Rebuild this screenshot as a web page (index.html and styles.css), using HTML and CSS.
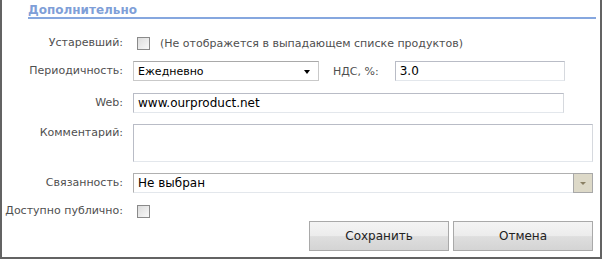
FILE: index.html
```html
<!DOCTYPE html>
<html>
<head>
<meta charset="utf-8">
<link rel="stylesheet" href="styles.css">
</head>
<body>
<div class="panel">
  <div class="legend"><span class="legend-text">Дополнительно</span></div>
  <div class="row row-obsolete">
    <label class="lbl">Устаревший:</label>
    <div class="ctl">
      <span class="checkbox"></span>
      <span class="hint">(Не отображется в выпадающем списке продуктов)</span>
    </div>
  </div>
  <div class="row row-period">
    <label class="lbl">Периодичность:</label>
    <div class="ctl">
      <div class="select"><span>Ежедневно</span><span class="arrow"></span></div>
      <label class="lbl-inline">НДС, %:</label>
      <div class="input input-vat">3.0</div>
    </div>
  </div>
  <div class="row row-web">
    <label class="lbl">Web:</label>
    <div class="ctl">
      <div class="input input-web">www.ourproduct.net</div>
    </div>
  </div>
  <div class="row row-comment">
    <label class="lbl">Комментарий:</label>
    <div class="ctl">
      <div class="textarea"></div>
    </div>
  </div>
  <div class="row row-link">
    <label class="lbl">Связанность:</label>
    <div class="ctl">
      <div class="combo"><span class="combo-text">Не выбран</span><span class="trigger"><span class="tri"></span></span></div>
    </div>
  </div>
  <div class="row row-public">
    <label class="lbl">Доступно публично:</label>
    <div class="ctl">
      <span class="checkbox"></span>
    </div>
  </div>
  <div class="buttons">
    <button class="btn">Сохранить</button>
    <button class="btn">Отмена</button>
  </div>
</div>
</body>
</html>
```
FILE: styles.css
```css
html, body {
  margin: 0;
  padding: 0;
  background: #fff;
}
body {
  font-family: "DejaVu Sans", Verdana, sans-serif;
  font-size: 11px;
}
.panel {
  width: 598px;
  height: 257px;
  border-left: 2px solid #636363;
  border-right: 2px solid #636363;
  border-bottom: 2px solid #636363;
}
.legend {
  margin-left: 26px;
  margin-right: 4px;
  height: 17px;
  border-bottom: 2px solid #86a7df;
  display: flex;
  align-items: flex-end;
}
.legend-text {
  color: #7f9fd8;
  font-weight: bold;
  font-size: 12px;
  line-height: 12px;
  padding-bottom: 1px;
}
.row {
  display: flex;
}
.lbl {
  width: 121px;
  text-align: right;
  color: #4f4f4f;
  flex: none;
  white-space: nowrap;
  line-height: 20px;
}
.ctl {
  margin-left: 10px;
  display: flex;
  align-items: center;
  flex: 1;
}
.row-obsolete { margin-top: 14px; height: 20px; }
.row-period { margin-top: 8px; height: 20px; }
.row-web { margin-top: 12px; height: 20px; }
.row-comment { margin-top: 11px; height: 38px; }
.row-comment .lbl { line-height: 18px; }
.row-link { margin-top: 11px; height: 20px; }
.row-public { margin-top: 10px; height: 16px; }
.row-public .lbl { line-height: 16px; }

.checkbox {
  width: 11px;
  height: 11px;
  border: 1px solid #8a8a8a;
  background: linear-gradient(135deg, #dcdcdc, #f8f8f8);
  margin-left: 4px;
  flex: none;
}
.hint {
  margin-left: 10px;
  color: #4f4f4f;
  white-space: nowrap;
}
.select {
  box-sizing: border-box;
  width: 186px;
  height: 20px;
  border: 1px solid #c9c9c9;
  border-top-color: #a9a9a9;
  display: flex;
  align-items: center;
  justify-content: space-between;
  padding: 0 8px 0 4px;
  color: #000;
}
.arrow {
  width: 0;
  height: 0;
  border-left: 3.5px solid transparent;
  border-right: 3.5px solid transparent;
  border-top: 4px solid #000;
  margin-top: 2px;
}
.lbl-inline {
  color: #4f4f4f;
  margin-left: 14px;
  white-space: nowrap;
}
.input {
  box-sizing: border-box;
  height: 20px;
  border: 1px solid #b9bcc6;
  border-bottom-color: #e3e7ec;
  border-right-color: #d6d9de;
  padding: 0 4px;
  line-height: 18px;
  color: #000;
  font-size: 12px;
}
.input-vat {
  width: 170px;
  margin-left: 16px;
}
.input-web {
  width: 431px;
}
.textarea {
  box-sizing: border-box;
  width: 460px;
  height: 38px;
  border: 1px solid #b9bcc6;
  border-bottom-color: #e3e7ec;
  border-right-color: #d6d9de;
  align-self: flex-start;
}
.combo {
  box-sizing: border-box;
  width: 460px;
  height: 20px;
  border: 1px solid #b0b0b0;
  border-bottom-color: #e3e7ec;
  display: flex;
}
.combo-text {
  flex: 1;
  padding-left: 4px;
  line-height: 18px;
  color: #000;
  font-size: 12px;
}
.trigger {
  width: 20px;
  height: 20px;
  margin-top: -1px;
  margin-right: -1px;
  box-sizing: border-box;
  border: 1px solid #a8a8a8;
  background: #ddd9c8;
  display: flex;
  align-items: center;
  justify-content: center;
}
.tri {
  width: 0;
  height: 0;
  border-left: 3px solid transparent;
  border-right: 3px solid transparent;
  border-top: 3px solid #8a8064;
  margin-top: 1px;
}
.buttons {
  display: flex;
  justify-content: flex-end;
  gap: 4px;
  margin-top: 2px;
  margin-right: 7px;
}
.btn {
  width: 140px;
  height: 30px;
  box-sizing: border-box;
  border: 1px solid #a9a9a9;
  background: linear-gradient(#f4f4f4 0%, #ececec 50%, #dedede 52%, #d4d4d4 100%);
  font-family: "DejaVu Sans", Verdana, sans-serif;
  font-size: 12px;
  color: #222;
  padding: 0;
}
```
